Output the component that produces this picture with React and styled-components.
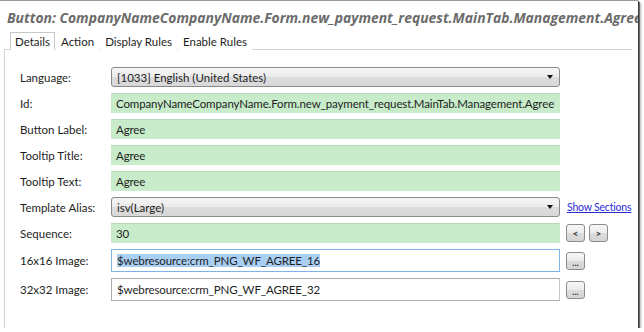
import styled, { createGlobalStyle } from "styled-components";

/* ================= GLOBAL ================= */

const Global = createGlobalStyle`
  html, body {
    margin: 0;
    padding: 0;
    background: #ffffff;
  }
  body {
    font-family: "Lato", "Noto Sans", sans-serif;
    font-size: 11.5px;
    color: #1e1e1e;
  }
`;

/* ================= FRAME ================= */

const Frame = styled.div`
  width: 638px;
  height: 328px;
  box-sizing: border-box;
  border-top: 1px solid #9a9a9a;
  background: #fff;
  overflow: hidden;
  display: flex;
  flex-direction: column;
  box-shadow: 1px 1px 0 #3c3c3c, 2px 2px 0 #6a6a6a, 3px 3px 2px rgba(0, 0, 0, 0.3);
`;

const Title = styled.div`
  padding: 7px 0 0 7px;
  height: 20px;
  line-height: 20px;
  font-family: "Open Sans", "Noto Sans", sans-serif;
  font-size: 13.9px;
  font-weight: 700;
  font-style: italic;
  color: #6b6b6b;
  white-space: nowrap;
`;

/* ================= TABS ================= */

const TabBar = styled.div`
  display: flex;
  gap: 1px;
  margin: 4px 0 0 10px;
  position: relative;
  z-index: 1;
`;

const Tab = styled.div`
  height: 18px;
  line-height: 17px;
  padding: 0 4px;
  box-sizing: border-box;
  border: 1px solid ${({ $active }) => ($active ? "#c8c8c8" : "transparent")};
  border-bottom: 1px solid ${({ $active }) => ($active ? "#fff" : "transparent")};
  background: #fff;
  margin-bottom: -1px;
  white-space: nowrap;
`;

/* ================= PANEL ================= */

const Panel = styled.div`
  flex: 1;
  margin-left: 4px;
  width: 628px;
  border-top: 1px solid #d2d2d2;
  border-left: 1px solid #d2d2d2;
  padding: 17px 0 0 15px;
  box-sizing: border-box;
`;

const Form = styled.div`
  display: grid;
  grid-template-columns: 91px 449px auto;
  row-gap: 6px;
  align-items: center;
`;

const Label = styled.div`
  white-space: nowrap;
`;

const Field = styled.div`
  height: ${({ $h }) => $h || 20}px;
  box-sizing: border-box;
  padding: 0 5px;
  display: flex;
  align-items: center;
  white-space: nowrap;
  overflow: hidden;
  letter-spacing: -0.12px;
  ${({ $kind }) =>
    $kind === "green"
      ? `
    background: #c8ecca;
    border-top: 1px solid #b8d9ba;
  `
      : $kind === "focus"
      ? `
    background: #fff;
    border: 1px solid #7fb2e5;
  `
      : `
    background: #fff;
    border: 1px solid #a9abb0;
    border-right-color: #c4c6ca;
  `}
`;

const Select = styled.div`
  height: 20px;
  box-sizing: border-box;
  border: 1px solid #8a8a8a;
  border-radius: 3px;
  background: linear-gradient(180deg, #f5f5f5 0%, #ebebeb 50%, #dcdcdc 51%, #d8d8d8 100%);
  display: flex;
  align-items: center;
  justify-content: space-between;
  padding: 0 6px 0 5px;
  white-space: nowrap;
`;

const Caret = styled.span`
  width: 0;
  height: 0;
  border-left: 3px solid transparent;
  border-right: 3px solid transparent;
  border-top: 4px solid #111;
`;

const Selected = styled.span`
  background: #a9cff3;
`;

const Extra = styled.div`
  display: flex;
  gap: 4px;
  padding-left: 6px;
`;

const SmallButton = styled.div`
  width: 19px;
  height: 18px;
  box-sizing: border-box;
  border: 1px solid #8c8c8c;
  border-radius: 3px;
  background: linear-gradient(180deg, #f7f7f7 0%, #ececec 50%, #dcdcdc 51%, #d4d4d4 100%);
  display: flex;
  align-items: center;
  justify-content: center;
  font-size: ${({ $dots }) => ($dots ? 9 : 10)}px;
  font-weight: 700;
  line-height: 1;
  color: #333;
  padding-top: ${({ $dots }) => ($dots ? 3 : 0)}px;
`;

const Link = styled.a`
  font-size: 10.5px;
  letter-spacing: -0.2px;
  color: #2b2bd6;
  text-decoration: underline;
  padding-left: 7px;
  white-space: nowrap;
`;

/* ================= APP ================= */

const tabs = ["Details", "Action", "Display Rules", "Enable Rules"];

export default function App() {
  return (
    <>
      <Global />
      <Frame>
        <Title>
          Button: CompanyNameCompanyName.Form.new_payment_request.MainTab.Management.Agree
        </Title>
        <TabBar>
          {tabs.map((t, i) => (
            <Tab key={t} $active={i === 0}>
              {t}
            </Tab>
          ))}
        </TabBar>
        <Panel>
          <Form>
            <Label>Language:</Label>
            <Select>
              <span>[1033] English (United States)</span>
              <Caret />
            </Select>
            <div />

            <Label>Id:</Label>
            <Field $kind="green">
              CompanyNameCompanyName.Form.new_payment_request.MainTab.Management.Agree
            </Field>
            <div />

            <Label>Button Label:</Label>
            <Field $kind="green">Agree</Field>
            <div />

            <Label>Tooltip Title:</Label>
            <Field $kind="green">Agree</Field>
            <div />

            <Label>Tooltip Text:</Label>
            <Field $kind="green">Agree</Field>
            <div />

            <Label>Template Alias:</Label>
            <Select>
              <span>isv(Large)</span>
              <Caret />
            </Select>
            <Link>Show Sections</Link>

            <Label>Sequence:</Label>
            <Field $kind="green">30</Field>
            <Extra>
              <SmallButton>&lt;</SmallButton>
              <SmallButton>&gt;</SmallButton>
            </Extra>

            <Label>16x16 Image:</Label>
            <Field $kind="focus" $h={23}>
              <Selected>$webresource:crm_PNG_WF_AGREE_16</Selected>
            </Field>
            <Extra>
              <SmallButton $dots>...</SmallButton>
            </Extra>

            <Label>32x32 Image:</Label>
            <Field $h={23}>$webresource:crm_PNG_WF_AGREE_32</Field>
            <Extra>
              <SmallButton $dots>...</SmallButton>
            </Extra>
          </Form>
        </Panel>
      </Frame>
    </>
  );
}
